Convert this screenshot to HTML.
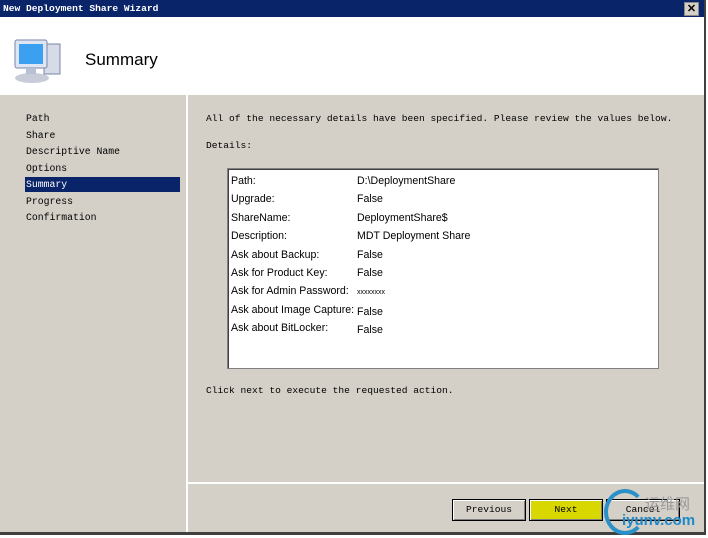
<!DOCTYPE html>
<html><head><style>
body{margin:0;width:708px;height:538px;background:#fff;position:relative;overflow:hidden;font-family:"Liberation Mono",monospace}
.a{position:absolute}
.mono{font-family:"Liberation Mono",monospace;font-size:9.6px;color:#000;white-space:nowrap}
.sans{font-family:"Liberation Sans",sans-serif;font-size:10.6px;color:#000;white-space:nowrap}
.btn{position:absolute;top:499px;height:20px;width:72px;background:#d4d0c8;border:1px solid #000;box-shadow:inset 1px 1px #fff,inset -1px -1px #808080;text-align:center;line-height:20px;font-size:9.6px;font-family:"Liberation Mono",monospace}
</style></head><body>
<div class="a" style="left:0;top:0;width:706px;height:535px;background:#d4d0c8"></div>
<div class="a" style="left:0;top:0;width:706px;height:17px;background:#0a246a"></div>
<div class="a" style="left:3px;top:1px;color:#fff;font-weight:bold;font-size:9.6px;font-family:'Liberation Mono',monospace;line-height:15px">New Deployment Share Wizard</div>
<div class="a" style="left:684px;top:2px;width:13px;height:12px;background:#d4d0c8;border:1px solid #888;font:bold 11px 'Liberation Sans';text-align:center;line-height:12px">✕</div>
<div class="a" style="left:0;top:17px;width:704px;height:78px;background:#fff"></div>
<svg class="a" style="left:12px;top:36px" width="52" height="50">
<ellipse cx="20" cy="42" rx="17" ry="5" fill="#c8ccd8"/>
<rect x="32" y="8" width="16" height="30" fill="#d6dbe8" stroke="#7a86a8"/>
<rect x="3" y="4" width="32" height="28" rx="2" fill="#dfe6f3" stroke="#7a86a8"/>
<rect x="7" y="8" width="24" height="20" fill="#3ca0f0"/>
<rect x="14" y="32" width="10" height="6" fill="#b8c0d4"/>
</svg>
<div class="a" style="left:85px;top:50px;font:17px 'Liberation Sans',sans-serif">Summary</div>
<div class="a" style="left:186px;top:95px;width:2px;height:437px;background:#fff"></div>
<div class="a" style="left:188px;top:482px;width:517px;height:2px;background:#fff"></div>
<div class="a" style="left:704px;top:0;width:2px;height:535px;background:#404040"></div>
<div class="a" style="left:0;top:532px;width:706px;height:3px;background:#404040"></div>
<div class="a" style="left:25px;top:177px;width:155px;height:15px;background:#0a246a"></div>
<div class="a mono" style="left:26px;top:111px;line-height:16.5px;font-size:9.8px">Path<br>Share<br>Descriptive Name<br>Options<br><span style="color:#fff">Summary</span><br>Progress<br>Confirmation</div>
<div class="a mono" style="left:206px;top:113px">All of the necessary details have been specified.  Please review the values below.</div>
<div class="a mono" style="left:206px;top:140px">Details:</div>
<div class="a" style="left:227px;top:168px;width:430px;height:199px;background:#fff;border:1px solid #808080;box-shadow:inset 1px 1px #404040"></div>
<div class="a sans" style="left:231px;top:172px;line-height:18.4px">Path:<br>Upgrade:<br>ShareName:<br>Description:<br>Ask about Backup:<br>Ask for Product Key:<br>Ask for Admin Password:<br>Ask about Image Capture:<br>Ask about BitLocker:</div>
<div class="a sans" style="left:357px;top:172px;line-height:18.4px">D:\DeploymentShare<br>False<br>DeploymentShare$<br>MDT Deployment Share<br>False<br>False<br><span style="font-size:7px">xxxxxxxx</span><br>False<br>False</div>
<div class="a mono" style="left:206px;top:385px">Click next to execute the requested action.</div>
<div class="btn" style="left:452px">Previous</div>
<div class="btn" style="left:529px;background:#d8d800">Next</div>
<div class="btn" style="left:606px">Cancel</div>
<div class="a" style="left:604px;top:489px;width:34px;height:38px;border-radius:50%;border:4px solid #2a90c8;border-right-color:transparent"></div>
<div class="a" style="left:645px;top:493px;font:15px 'Noto Sans CJK SC',sans-serif;color:#999">运维网</div>
<div class="a" style="left:622px;top:512px;font:bold 15px 'Liberation Sans',sans-serif;color:#1e88c8">iyunv.com</div>
</body></html>
